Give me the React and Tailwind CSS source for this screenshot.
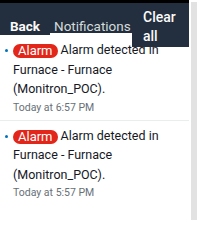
import React from "react";

const items = [
  { time: "Today at 6:57 PM" },
  { time: "Today at 5:57 PM" },
];

function NotificationItem({ time, last }) {
  return (
    <li className={`relative pl-[13px] pr-2 pt-[5px] pb-[6px] ${last ? "" : "border-b border-[#eaeded]"}`}>
      {/* unread dot */}
      <span className="absolute left-[5px] top-[14px] w-[3px] h-[3px] rounded-full bg-[#0073bb]" />
      <p className="text-[12.5px] leading-[19.5px] text-[#16191f] w-[160px]">
        <span className="inline-block align-[-1px] bg-[#e3261a] text-white text-[13px] rounded-full px-[5px] leading-[14px] mr-[3px]">Alarm</span>
        Alarm detected in Furnace - Furnace (Monitron_POC).
      </p>
      <p className="mt-[2px] text-[10.5px] leading-[13px] text-[#687078]">{time}</p>
    </li>
  );
}

export default function App() {
  return (
    <div className="flex w-[200px] h-[227px] bg-white font-['Roboto',sans-serif]">
      <div className="w-[189px]">
        {/* HEADER */}
        <div className="flex items-start h-[35px] border-t-[3px] border-black">
          <div className="w-[50px] h-[32px] bg-[#232f3e] pl-[10px] pt-[15px] text-[13.5px] leading-[16px] font-bold text-[#fafafa]">
            Back
          </div>
          <div className="w-[82px] h-[30px] bg-[#232f3e] pl-[4px] pt-[15px] text-[13.5px] leading-[16px] text-[#d5dbdb] whitespace-nowrap">
            Notifications
          </div>
          <div className="relative z-10 w-[57px] h-[44px] bg-[#232f3e] pl-[11px] pt-[5px] text-[14px] leading-[19px] font-medium text-[#fafafa]">
            Clear
            <br />
            all
          </div>
        </div>
        {/* LIST */}
        <ul>
          {items.map((item, i) => (
            <NotificationItem key={i} time={item.time} last={i === items.length - 1} />
          ))}
        </ul>
      </div>
      {/* scrollbar */}
      <div className="ml-[2px] mt-[2px] w-[6px] h-[218px] bg-[#e2e2e2]" />
    </div>
  );
}
